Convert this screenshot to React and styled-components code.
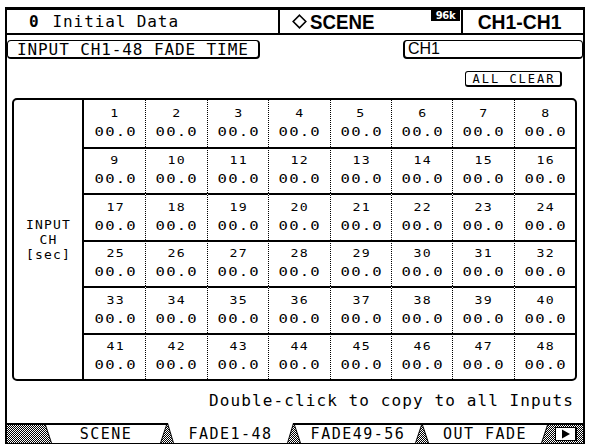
import React from 'react';
import styled, { createGlobalStyle } from 'styled-components';

const mono = `"DejaVu Sans Mono", "Liberation Mono", monospace`;
const sans = `"Liberation Sans", Arial, sans-serif`;

const GlobalStyle = createGlobalStyle`
  html, body {
    margin: 0;
    padding: 0;
    background: #fff;
  }
  body {
    width: 590px;
    height: 448px;
    overflow: hidden;
    font-family: ${mono};
    color: #000;
  }
`;

const Screen = styled.div`
  box-sizing: border-box;
  width: 580px;
  height: 437px;
  margin: 7px 0 0 5px;
  border: 2px solid #000;
  border-top-width: 3px;
  border-bottom-width: 1px;
  display: flex;
  flex-direction: column;
`;

const Header = styled.div`
  box-sizing: border-box;
  height: 25px;
  border-bottom: 2px solid #000;
  display: flex;
`;

const TitleCell = styled.div`
  box-sizing: border-box;
  width: 273px;
  border-right: 2px solid #000;
  padding-left: 22px;
  display: flex;
  align-items: center;
  font-size: 16px;
  letter-spacing: 0.9px;
`;

const SceneNo = styled.b`
  margin-right: 13px;
`;

const SceneCell = styled.div`
  box-sizing: border-box;
  width: 183px;
  border-right: 2px solid #000;
  padding-left: 12px;
  display: flex;
  align-items: center;
`;

const Big = styled.span`
  display: inline-block;
  font-family: ${sans};
  font-weight: 700;
  font-size: 21px;
  line-height: 22px;
  transform: scaleX(${({ $sx }) => $sx});
  transform-origin: ${({ $origin }) => $origin || 'center'};
`;

const Badge = styled.span`
  margin-left: auto;
  margin-right: 1px;
  align-self: flex-start;
  width: 29px;
  height: 11px;
  background: #000;
  color: #fff;
  font-family: "DejaVu Sans", sans-serif;
  font-weight: 700;
  font-size: 10px;
  line-height: 11px;
  text-align: center;
  letter-spacing: -0.3px;
`;

const ChCell = styled.div`
  flex: 1;
  display: flex;
  align-items: center;
  justify-content: center;
  padding-right: 6px;
`;

const Main = styled.div`
  flex: 1;
  display: flex;
  flex-direction: column;
`;

const TopRow = styled.div`
  margin-top: 5px;
  height: 19px;
  display: flex;
  justify-content: space-between;
`;

const PageLabel = styled.div`
  box-sizing: border-box;
  width: 253px;
  height: 19px;
  border: 1px solid #000;
  border-right-width: 2px;
  border-bottom-width: 2px;
  border-radius: 4px;
  padding-left: 9px;
  display: flex;
  align-items: center;
  font-size: 16px;
  letter-spacing: 0.9px;
`;

const ChannelBox = styled.div`
  box-sizing: border-box;
  width: 180px;
  height: 19px;
  border: 1px solid #000;
  border-left-width: 2px;
  border-bottom-width: 2px;
  border-radius: 4px;
  padding-left: 3px;
  display: flex;
  align-items: center;
  font-family: ${sans};
  font-size: 16px;
`;

const ClearRow = styled.div`
  margin-top: 12px;
  padding-right: 21px;
  display: flex;
  justify-content: flex-end;
`;

const ClearButton = styled.button`
  box-sizing: border-box;
  width: 97px;
  height: 16px;
  padding: 0 0 0 2px;
  background: #fff;
  color: #000;
  border: 1px solid #000;
  border-right-width: 2px;
  border-bottom-width: 2px;
  border-radius: 3px;
  font-family: ${mono};
  font-size: 12px;
  line-height: 12px;
  letter-spacing: 2px;
`;

const Table = styled.div`
  box-sizing: border-box;
  margin: 11px 6px 0 5px;
  height: 283px;
  border: 2px solid #000;
  border-radius: 5px;
  display: grid;
  grid-template-columns: 70px repeat(8, 1fr);
  grid-template-rows: repeat(6, 1fr);
`;

const RowLabel = styled.div`
  grid-row: 1 / span 6;
  grid-column: 1;
  border-right: 2px solid #000;
  display: flex;
  flex-direction: column;
  align-items: center;
  justify-content: center;
  font-size: 13px;
  line-height: 15px;
  letter-spacing: 1.2px;
  padding-left: 1px;
`;

const Cell = styled.div`
  box-sizing: border-box;
  border-top: ${({ $top }) => ($top ? 'none' : '2px solid #000')};
  border-left: ${({ $left }) => ($left ? 'none' : '1px dotted #000')};
  display: flex;
  flex-direction: column;
  align-items: center;
  justify-content: center;
  gap: 3px;
`;

const CellNum = styled.span`
  display: inline-block;
  font-size: 11px;
  line-height: 14px;
  letter-spacing: 1px;
  padding-left: 1px;
  transform: scaleX(1.2);
`;

const CellValue = styled.span`
  display: inline-block;
  font-size: 13px;
  line-height: 16px;
  letter-spacing: 1px;
  padding-left: 1px;
  transform: scaleX(1.2);
`;

const Note = styled.div`
  margin-top: 12px;
  padding-right: 9px;
  text-align: right;
  font-size: 16px;
  line-height: 16px;
  letter-spacing: 1.1px;
`;

const TabBar = styled.div`
  box-sizing: border-box;
  height: 20px;
  border-top: 2px solid #000;
  display: flex;
  background-image: repeating-conic-gradient(#000 0% 25%, #fff 0% 50%);
  background-size: 2px 2px;
`;

const Filler = styled.div`
  width: 38px;
`;

const trapezoid = 'polygon(0 0, 100% 0, calc(100% - 6px) 100%, 6px 100%)';

const Tab = styled.div`
  box-sizing: border-box;
  width: ${({ $w }) => $w}px;
  margin-top: ${({ $active }) => ($active ? '-2px' : '0')};
  padding: 0 1px;
  background: #000;
  clip-path: ${trapezoid};
  display: flex;
`;

const TabFace = styled.div`
  flex: 1;
  background: #fff;
  clip-path: ${trapezoid};
  display: flex;
  align-items: center;
  justify-content: center;
  padding-top: ${({ $active }) => ($active ? '2px' : '0')};
  font-size: 15px;
  line-height: 17px;
  letter-spacing: 1.5px;
  white-space: pre;
`;

const NextButton = styled.div`
  box-sizing: border-box;
  width: 22px;
  height: 14px;
  margin: 0 6px 0 7px;
  align-self: center;
  background: #fff;
  border: 1px solid #000;
  border-right-width: 2px;
  display: flex;
  align-items: center;
  justify-content: center;
`;

const tabs = [
  { label: 'SCENE', w: 122 },
  { label: 'FADE1-48', w: 127, active: true },
  { label: 'FADE49-56', w: 128 },
  { label: 'OUT FADE', w: 126 },
];

const rows = [0, 1, 2, 3, 4, 5];
const cols = [0, 1, 2, 3, 4, 5, 6, 7];

function Diamond() {
  return (
    <svg width="15" height="15" viewBox="0 0 15 15" style={{ marginRight: 3 }}>
      <polygon points="7.5,1.2 13.8,7.5 7.5,13.8 1.2,7.5" fill="none" stroke="#000" strokeWidth="1.6" />
    </svg>
  );
}

function NextIcon() {
  return (
    <svg width="12" height="10" viewBox="0 0 12 10">
      <polygon points="2,0.5 10,5 2,9.5" fill="#000" />
    </svg>
  );
}

export default function App() {
  return (
    <>
      <GlobalStyle />
      <Screen>
        <Header>
          <TitleCell>
            <SceneNo>0</SceneNo>
            Initial Data
          </TitleCell>
          <SceneCell>
            <Diamond />
            <Big $sx={0.89} $origin="left">SCENE</Big>
            <Badge>96k</Badge>
          </SceneCell>
          <ChCell>
            <Big $sx={0.92}>CH1-CH1</Big>
          </ChCell>
        </Header>

        <Main>
          <TopRow>
            <PageLabel>INPUT CH1-48 FADE TIME</PageLabel>
            <ChannelBox>CH1</ChannelBox>
          </TopRow>
          <ClearRow>
            <ClearButton>ALL CLEAR</ClearButton>
          </ClearRow>

          <Table>
            <RowLabel>
              <span>INPUT</span>
              <span>CH</span>
              <span>[sec]</span>
            </RowLabel>
            {rows.map((r) =>
              cols.map((c) => (
                <Cell key={`${r}-${c}`} $top={r === 0} $left={c === 0}>
                  <CellNum>{r * 8 + c + 1}</CellNum>
                  <CellValue>00.0</CellValue>
                </Cell>
              ))
            )}
          </Table>

          <Note>Double-click to copy to all Inputs</Note>
        </Main>

        <TabBar>
          <Filler />
          {tabs.map((t) => (
            <Tab key={t.label} $w={t.w} $active={t.active}>
              <TabFace $active={t.active}>{t.label}</TabFace>
            </Tab>
          ))}
          <NextButton>
            <NextIcon />
          </NextButton>
        </TabBar>
      </Screen>
    </>
  );
}
